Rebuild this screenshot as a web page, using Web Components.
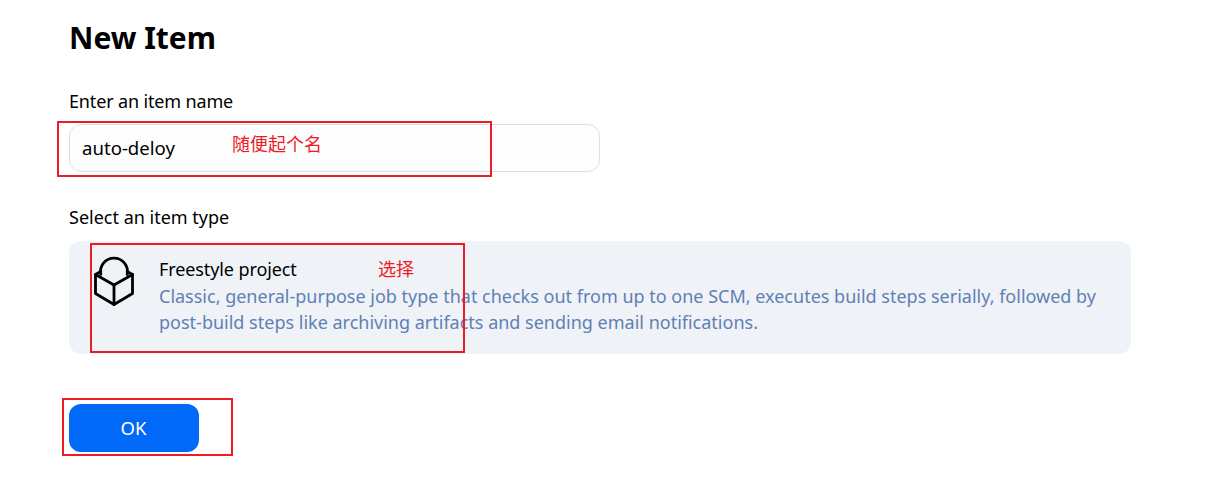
<!DOCTYPE html>
<html>
<head>
<meta charset="utf-8">
<style>
  html, body { margin: 0; background: #fff; }
  body { font-family: "Noto Sans", "Noto Sans CJK SC", sans-serif; color: #000; }
</style>
</head>
<body>
<new-item-page>
  <name-field label="Enter an item name" value="auto-deloy"></name-field>
  <type-option slot="types" name="Freestyle project">Classic, general-purpose job type that checks out from up to one SCM, executes build steps serially, followed by post-build steps like archiving artifacts and sending email notifications.</type-option>
  <ok-button slot="actions">OK</ok-button>
  <red-note slot="notes" style="left:57px;top:121px;width:431px;height:52px;--tx:173px;--ty:8px">随便起个名</red-note>
  <red-note slot="notes" style="left:90px;top:243px;width:371px;height:106px;--tx:286px;--ty:11px">选择</red-note>
  <red-note slot="notes" style="left:62px;top:398px;width:167px;height:54px"></red-note>
</new-item-page>
<script>
class NewItemPage extends HTMLElement{
    constructor(){
        super();
        this.attachShadow({ mode: 'open'});
        this.shadowRoot.innerHTML = `
            <style>
                :host { display: block; position: relative; height: 502px; overflow: hidden; }
                .page { display: flex; flex-direction: column; padding: 16px 0 0 69px; width: 1062px; }
                h1 { margin: 0 0 29px; font-size: 30px; line-height: 44px; font-weight: 700; }
                .label { font-size: 18px; line-height: 24px; margin: 33px 0 12px; }
                .actions { margin-top: 50px; }
            </style>
            <div class="page">
                <h1>New Item</h1>
                <slot></slot>
                <div class="label">Select an item type</div>
                <slot name="types"></slot>
                <div class="actions"><slot name="actions"></slot></div>
            </div>
            <slot name="notes"></slot>
        `;
    }
}
customElements.define("new-item-page", NewItemPage);

class NameField extends HTMLElement{
    constructor(){
        super();
        this.attachShadow({ mode: 'open'});
        this.shadowRoot.innerHTML = `
            <style>
                :host { display: block; }
                .label { font-size: 18px; line-height: 24px; margin-bottom: 11px; letter-spacing: -0.15px; }
                .input {
                    box-sizing: border-box;
                    width: 531px;
                    height: 48px;
                    padding: 0 12px 2px;
                    display: flex;
                    align-items: center;
                    border: 1px solid #d9deeb;
                    border-radius: 12px;
                    background: #fdfdfe;
                    font-size: 18.6px;
                }
            </style>
            <div class="label"></div>
            <div class="input"></div>
        `;
    }

    connectedCallback() {
        this.shadowRoot.querySelector(".label").textContent = this.getAttribute("label");
        this.shadowRoot.querySelector(".input").textContent = this.getAttribute("value");
    }
}
customElements.define("name-field", NameField);

class TypeOption extends HTMLElement{
    constructor(){
        super();
        this.attachShadow({ mode: 'open'});
        this.shadowRoot.innerHTML = `
            <style>
                :host { display: block; }
                .card {
                    box-sizing: border-box;
                    height: 113px;
                    display: flex;
                    gap: 23px;
                    padding: 16px 30px 0 24px;
                    border-radius: 12px;
                    background: #eff3f8;
                }
                svg { flex: none; width: 43px; height: 50px; overflow: visible; }
                .name { font-size: 18px; line-height: 24px; margin-bottom: 2px; letter-spacing: -0.1px; }
                .desc { font-size: 18px; line-height: 26px; color: #5f80b4; }
            </style>
            <div class="card">
                <svg viewBox="0 0 43 50" fill="none" stroke="#000" stroke-width="2.8" stroke-linejoin="round" stroke-linecap="round">
                    <path d="M21 28 2.5 17.5V36.5L21 47.5 39.5 36.5V17.5z"/>
                    <path d="M21 28V47.5"/>
                    <path d="M7.8 17.5A13.5 13.5 0 1 1 34.2 17.5"/>
                    <path d="M7.8 14.5 2.5 17.5M34.2 14.5 39.5 17.5"/>
                </svg>
                <div>
                    <div class="name"></div>
                    <div class="desc"><slot></slot></div>
                </div>
            </div>
        `;
    }

    connectedCallback() {
        this.shadowRoot.querySelector(".name").textContent = this.getAttribute("name");
    }
}
customElements.define("type-option", TypeOption);

class OkButton extends HTMLElement{
    constructor(){
        super();
        this.attachShadow({ mode: 'open'});
        this.shadowRoot.innerHTML = `
            <style>
                :host {
                    display: flex;
                    box-sizing: border-box;
                    width: 130px;
                    height: 48px;
                    padding: 0 1px 2px 0;
                    align-items: center;
                    justify-content: center;
                    border-radius: 12px;
                    background: #0069f7;
                    color: #fff;
                    font-size: 18.5px;
                }
            </style>
            <slot></slot>
        `;
    }
}
customElements.define("ok-button", OkButton);

class RedNote extends HTMLElement{
    constructor(){
        super();
        this.attachShadow({ mode: 'open'});
        this.shadowRoot.innerHTML = `
            <style>
                :host {
                    display: block;
                    position: absolute;
                    border: 2px solid #ed1c24;
                }
                span {
                    position: absolute;
                    left: var(--tx, 0);
                    top: var(--ty, 0);
                    color: #ed1c24;
                    font: 18px/24px "Noto Sans CJK SC", sans-serif;
                    white-space: nowrap;
                }
            </style>
            <span><slot></slot></span>
        `;
    }
}
customElements.define("red-note", RedNote);
</script>
</body>
</html>
